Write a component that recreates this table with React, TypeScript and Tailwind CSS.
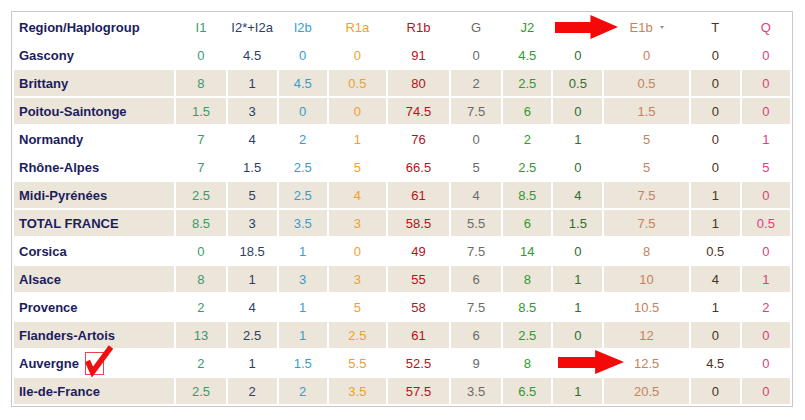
import React from "react";

type Row = { name: string; v: string[]; striped: boolean };

const rows: Row[] = [
  { name: "Gascony", v: ["0", "4.5", "0", "0", "91", "0", "4.5", "0", "0", "0", "0"], striped: false },
  { name: "Brittany", v: ["8", "1", "4.5", "0.5", "80", "2", "2.5", "0.5", "0.5", "0", "0"], striped: true },
  { name: "Poitou-Saintonge", v: ["1.5", "3", "0", "0", "74.5", "7.5", "6", "0", "1.5", "0", "0"], striped: true },
  { name: "Normandy", v: ["7", "4", "2", "1", "76", "0", "2", "1", "5", "0", "1"], striped: false },
  { name: "Rhône-Alpes", v: ["7", "1.5", "2.5", "5", "66.5", "5", "2.5", "0", "5", "0", "5"], striped: false },
  { name: "Midi-Pyrénées", v: ["2.5", "5", "2.5", "4", "61", "4", "8.5", "4", "7.5", "1", "0"], striped: true },
  { name: "TOTAL FRANCE", v: ["8.5", "3", "3.5", "3", "58.5", "5.5", "6", "1.5", "7.5", "1", "0.5"], striped: true },
  { name: "Corsica", v: ["0", "18.5", "1", "0", "49", "7.5", "14", "0", "8", "0.5", "0"], striped: false },
  { name: "Alsace", v: ["8", "1", "3", "3", "55", "6", "8", "1", "10", "4", "1"], striped: true },
  { name: "Provence", v: ["2", "4", "1", "5", "58", "7.5", "8.5", "1", "10.5", "1", "2"], striped: false },
  { name: "Flanders-Artois", v: ["13", "2.5", "1", "2.5", "61", "6", "2.5", "0", "12", "0", "0"], striped: true },
  { name: "Auvergne", v: ["2", "1", "1.5", "5.5", "52.5", "9", "8", "", "12.5", "4.5", "0"], striped: false },
  { name: "Ile-de-France", v: ["2.5", "2", "2", "3.5", "57.5", "3.5", "6.5", "1", "20.5", "0", "0"], striped: true },
];

const colColors = [
  "text-[#3a9a6e]",
  "text-[#2c3e66]",
  "text-[#3a9ccc]",
  "text-[#f0a030]",
  "text-[#b5121b]",
  "text-[#6a6a6a]",
  "text-[#2f9a2f]",
  "text-[#2e6e2e]",
  "text-[#c8825a]",
  "text-[#4a3222]",
  "text-[#e0407a]",
];

const widths = ["w-[160px]", "w-[49px]", "w-[49px]", "w-[48px]", "w-[57px]", "w-[61px]", "w-[50px]", "w-[48px]", "w-[49px]", "w-[84px]", "w-[49px]", "w-[48px]"];

const headers = ["I1", "I2*+I2a", "I2b", "R1a", "R1b", "G", "J2", "", "E1b", "T", "Q"];

function Arrow({ className }: { className: string }) {
  return (
    <svg className={className} viewBox="0 0 64 24" preserveAspectRatio="none">
      <polygon points="0,7 36,7 36,0 64,12 36,24 36,18 0,18" fill="#f40808" />
    </svg>
  );
}

export default function App() {
  return (
    <div className="w-[805px] h-[420px] bg-white pt-[11px] pl-[11px] relative" style={{ fontFamily: '"Liberation Sans", Arial, sans-serif' }}>
      <div className="w-[782px] border border-[#c8c8c8]">
        <table className="table-fixed border-separate border-spacing-[2px] w-[780px] text-[13px] leading-none">
          <colgroup>
            {widths.map((w, i) => (
              <col key={i} className={w} />
            ))}
          </colgroup>
          <thead>
            <tr>
              <th className="h-[26px] p-0 pl-[5px] text-left font-bold text-[#1c1c5e]">Region/Haplogroup</th>
              {headers.map((h, i) => (
                <th key={i} className={`h-[26px] p-0 text-center font-normal ${colColors[i]}`}>
                  {h === "E1b" ? (
                    <span className="inline-flex items-center gap-[7px]">
                      E1b
                      <span className="inline-block w-0 h-0 border-l-[2.5px] border-r-[2.5px] border-t-[3px] border-l-transparent border-r-transparent border-t-[#b08878]" />
                    </span>
                  ) : (
                    h
                  )}
                </th>
              ))}
            </tr>
          </thead>
          <tbody>
            {rows.map((r) => (
              <tr key={r.name}>
                <td className={`h-[26px] p-0 pl-[5px] font-bold text-[#1c1c5e] ${r.striped ? "bg-[#ece5d9]" : "bg-white"}`}>{r.name}</td>
                {r.v.map((v, i) => (
                  <td key={i} className={`h-[26px] p-0 text-center ${colColors[i]} ${r.striped ? "bg-[#ece5d9]" : "bg-white"}`}>
                    {v}
                  </td>
                ))}
              </tr>
            ))}
          </tbody>
        </table>
      </div>

      <Arrow className="absolute left-[555px] top-[15px] w-[63px] h-[24px]" />
      <Arrow className="absolute left-[558px] top-[350px] w-[66px] h-[24px]" />

      <svg className="absolute left-[82px] top-[344px] w-[32px] h-[34px]" viewBox="0 0 32 34">
        <rect x="3.5" y="8.5" width="18" height="22" fill="none" stroke="#e24848" strokeWidth="1" />
        <path d="M5.5 17 L10.5 28 L29 3" fill="none" stroke="#ee1010" strokeWidth="5.5" strokeLinejoin="miter" strokeLinecap="butt" />
      </svg>
    </div>
  );
}
